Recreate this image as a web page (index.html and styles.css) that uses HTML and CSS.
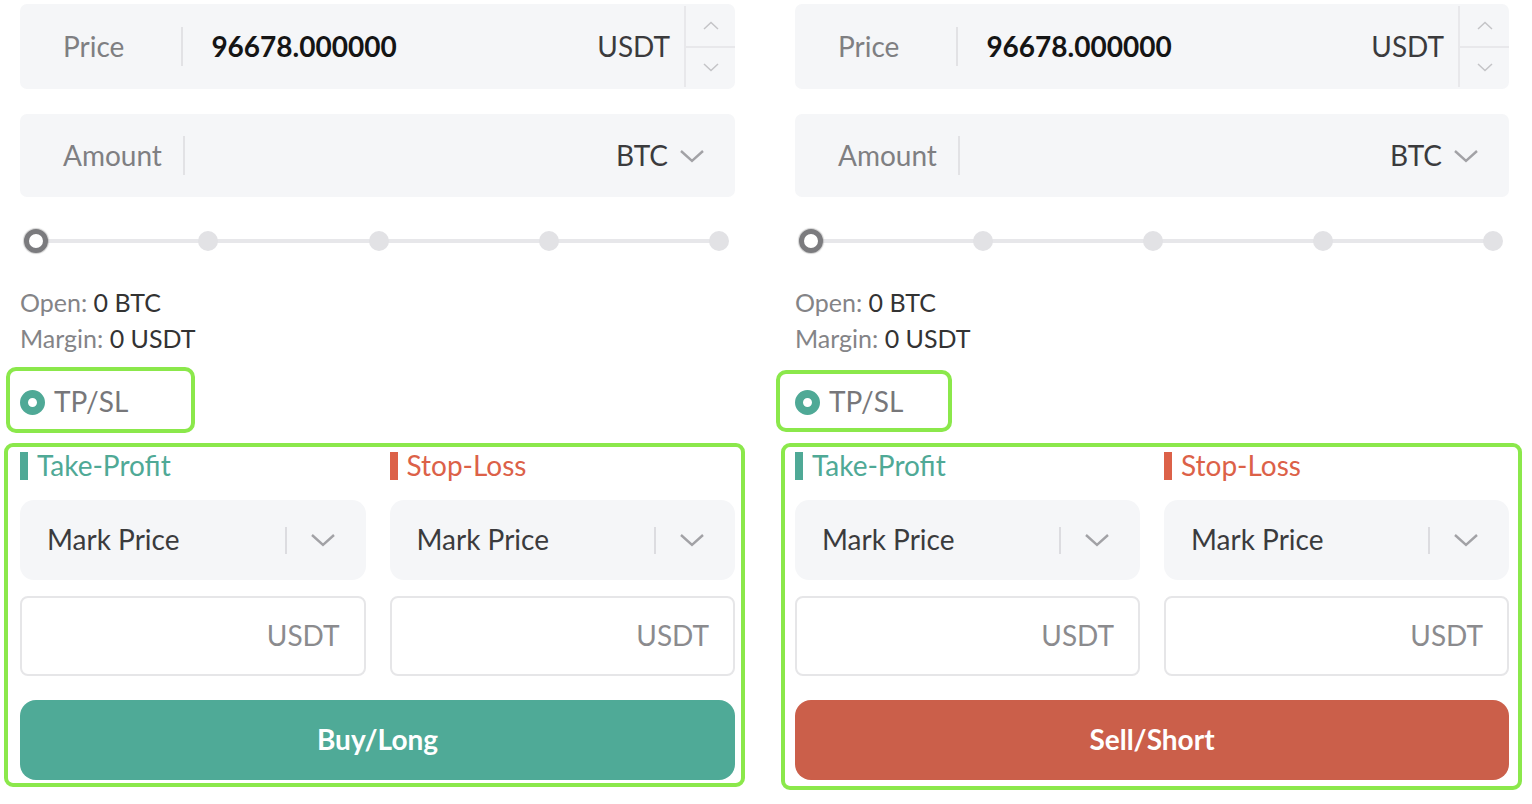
FILE: index.html
```html
<!DOCTYPE html>
<html>
<head>
<meta charset="utf-8">
<link rel="stylesheet" href="styles.css">
</head>
<body>
<div class="page">
  <section class="col">
    <div class="field price">
      <span class="label">Price</span>
      <span class="sep"></span>
      <span class="value">96678.000000</span>
      <span class="unit">USDT</span>
      <div class="spinner">
        <div class="spin"><svg width="16" height="9" viewBox="0 0 16 9"><path d="M1 8 L8 1.5 L15 8" fill="none" stroke="#c4c4c7" stroke-width="1.5"/></svg></div>
        <div class="spin"><svg width="16" height="9" viewBox="0 0 16 9"><path d="M1 1 L8 7.5 L15 1" fill="none" stroke="#c4c4c7" stroke-width="1.5"/></svg></div>
      </div>
    </div>
    <div class="field amount">
      <span class="label">Amount</span>
      <span class="sep"></span>
      <span class="value"></span>
      <span class="unit">BTC</span>
      <svg class="chev" width="26" height="14" viewBox="0 0 26 14"><path d="M2 2 L13 12 L24 2" fill="none" stroke="#a2a2a6" stroke-width="2.4"/></svg>
    </div>
    <div class="slider">
      <span class="track"></span>
      <span class="dot active"></span>
      <span class="dot"></span>
      <span class="dot"></span>
      <span class="dot"></span>
      <span class="dot"></span>
    </div>
    <div class="info">
      <div><span class="k">Open:</span> <span class="v">0 BTC</span></div>
      <div><span class="k">Margin:</span> <span class="v">0 USDT</span></div>
    </div>
    <div class="tpsl"><span class="radio"></span><span>TP/SL</span></div>
    <div class="tpgrid">
      <div class="sub">
        <div class="title tp">Take-Profit</div>
        <div class="select"><span class="stext">Mark Price</span><span class="ssep"></span><svg class="chev" width="26" height="14" viewBox="0 0 26 14"><path d="M2 2 L13 12 L24 2" fill="none" stroke="#a2a2a6" stroke-width="2.4"/></svg></div>
        <div class="input"><span>USDT</span></div>
      </div>
      <div class="sub">
        <div class="title sl">Stop-Loss</div>
        <div class="select"><span class="stext">Mark Price</span><span class="ssep"></span><svg class="chev" width="26" height="14" viewBox="0 0 26 14"><path d="M2 2 L13 12 L24 2" fill="none" stroke="#a2a2a6" stroke-width="2.4"/></svg></div>
        <div class="input"><span>USDT</span></div>
      </div>
    </div>
    <button class="btn buy">Buy/Long</button>
    <div class="mark mark-tpsl-l"></div>
    <div class="mark mark-box-l"></div>
  </section>

  <section class="col">
    <div class="field price">
      <span class="label">Price</span>
      <span class="sep"></span>
      <span class="value">96678.000000</span>
      <span class="unit">USDT</span>
      <div class="spinner">
        <div class="spin"><svg width="16" height="9" viewBox="0 0 16 9"><path d="M1 8 L8 1.5 L15 8" fill="none" stroke="#c4c4c7" stroke-width="1.5"/></svg></div>
        <div class="spin"><svg width="16" height="9" viewBox="0 0 16 9"><path d="M1 1 L8 7.5 L15 1" fill="none" stroke="#c4c4c7" stroke-width="1.5"/></svg></div>
      </div>
    </div>
    <div class="field amount">
      <span class="label">Amount</span>
      <span class="sep"></span>
      <span class="value"></span>
      <span class="unit">BTC</span>
      <svg class="chev" width="26" height="14" viewBox="0 0 26 14"><path d="M2 2 L13 12 L24 2" fill="none" stroke="#a2a2a6" stroke-width="2.4"/></svg>
    </div>
    <div class="slider">
      <span class="track"></span>
      <span class="dot active"></span>
      <span class="dot"></span>
      <span class="dot"></span>
      <span class="dot"></span>
      <span class="dot"></span>
    </div>
    <div class="info">
      <div><span class="k">Open:</span> <span class="v">0 BTC</span></div>
      <div><span class="k">Margin:</span> <span class="v">0 USDT</span></div>
    </div>
    <div class="tpsl"><span class="radio"></span><span>TP/SL</span></div>
    <div class="tpgrid">
      <div class="sub">
        <div class="title tp">Take-Profit</div>
        <div class="select"><span class="stext">Mark Price</span><span class="ssep"></span><svg class="chev" width="26" height="14" viewBox="0 0 26 14"><path d="M2 2 L13 12 L24 2" fill="none" stroke="#a2a2a6" stroke-width="2.4"/></svg></div>
        <div class="input"><span>USDT</span></div>
      </div>
      <div class="sub">
        <div class="title sl">Stop-Loss</div>
        <div class="select"><span class="stext">Mark Price</span><span class="ssep"></span><svg class="chev" width="26" height="14" viewBox="0 0 26 14"><path d="M2 2 L13 12 L24 2" fill="none" stroke="#a2a2a6" stroke-width="2.4"/></svg></div>
        <div class="input"><span>USDT</span></div>
      </div>
    </div>
    <button class="btn sell">Sell/Short</button>
    <div class="mark mark-tpsl-r"></div>
    <div class="mark mark-box-r"></div>
  </section>
</div>
</body>
</html>
```

FILE: styles.css
```css
* { box-sizing: border-box; }
html, body { margin: 0; padding: 0; background: #fff; }
body { font-family: "Lato", "Noto Sans", "Liberation Sans", sans-serif; color: #333; min-height: 804px; }

.page {
  display: grid;
  grid-template-columns: 715px 714px;
  column-gap: 60px;
  padding: 4px 0 24px 20px;
}
.col { position: relative; display: flex; flex-direction: column; }

.field {
  display: flex;
  align-items: center;
  background: #f5f6f8;
  border-radius: 7px;
  padding-left: 43px;
}
.field.price { height: 85px; }
.field.amount { height: 83px; margin-top: 25px; padding-right: 30px; }
.field .label, .field .value, .field .unit { padding-bottom: 2px; }
.field .label { font-size: 28px; color: #7f7f82; }
.field .sep { width: 2px; height: 39px; background: #e2e2e5; margin-left: 57px; margin-right: 28px; }
.field.amount .sep { margin-left: 21px; }
.field .value { font-size: 28px; font-weight: 700; color: #151515; flex: 1; }
.field .unit { font-size: 28px; color: #3b3b3d; }
.field.price .unit { margin-right: 14px; }
.field.amount .unit { margin-right: 11px; }

.spinner {
  width: 51px;
  align-self: stretch;
  margin: 2px 0;
  border-left: 2px solid #e8e8eb;
  display: flex;
  flex-direction: column;
}
.spin { flex: 1; display: flex; align-items: center; justify-content: center; }
.spin + .spin { border-top: 2px solid #e8e8eb; }

.slider {
  position: relative;
  height: 24px;
  margin-top: 32px;
  display: flex;
  justify-content: space-between;
  align-items: center;
  padding: 0 6px 0 4px;
}
.slider .track {
  position: absolute;
  left: 16px; right: 16px;
  top: 10px;
  height: 4px;
  background: #e7e7ea;
  border-radius: 2px;
}
.slider .dot {
  position: relative;
  width: 20px; height: 20px;
  border-radius: 50%;
  background: #e2e2e5;
}
.slider .dot.active {
  width: 24px; height: 24px;
  background: #fff;
  border: 5px solid #7b7b7e;
  box-shadow: 0 0 1px 1px rgba(120,120,120,0.35);
}

.info { margin-top: 31px; font-size: 25px; line-height: 36px; }
.info .k { color: #848487; }
.info .v { color: #333; }

.tpsl {
  display: flex; align-items: center;
  height: 36px; margin-top: 28px;
  font-size: 28px; color: #77777a;
}
.tpsl span:last-child { padding-bottom: 2px; }
.radio {
  width: 25px; height: 25px; border-radius: 50%;
  border: 8px solid #4fa996; background: #fff;
  margin-right: 9px;
}

.tpgrid {
  display: grid;
  grid-template-columns: 1fr 1fr;
  column-gap: 24px;
  margin-top: 32px;
}
.title {
  height: 28px;
  font-size: 28px;
  line-height: 26px;
  border-left: 8px solid;
  padding-left: 9px;
}
.title.tp { color: #4fa996; border-color: #4fa996; }
.title.sl { color: #dc6148; border-color: #dc6148; }

.select {
  height: 80px;
  margin-top: 20px;
  background: #f5f6f8;
  border-radius: 14px;
  display: flex; align-items: center;
  padding-left: 27px;
}
.select .stext { flex: 1; font-size: 28px; color: #3b3b3d; padding-bottom: 2px; }
.select .ssep { width: 2px; height: 27px; background: #dcdce0; margin-right: 23px; }
.select .chev { margin-right: 30px; }

.input {
  height: 80px;
  margin-top: 16px;
  border: 2px solid #e6e6e8;
  border-radius: 8px;
  display: flex; align-items: center; justify-content: flex-end;
  padding: 0 24px 2px 0;
  font-size: 28px; color: #8b8b8e;
}

.btn {
  height: 80px;
  margin-top: 24px;
  border: 0;
  border-radius: 16px;
  color: #fff;
  font-family: "Lato", "Noto Sans", sans-serif;
  font-size: 28px;
  font-weight: 700;
  padding-bottom: 3px;
}
.btn.buy { background: #4faa97; }
.btn.sell { background: #cb5f4a; }

.mark {
  position: absolute;
  border: 4px solid #8be84b;
  pointer-events: none;
}
.mark-tpsl-l { left: -14px; top: 363px; width: 189px; height: 66px; border-radius: 10px; }
.mark-box-l { left: -16px; top: 439px; width: 741px; height: 344px; border-radius: 9px; }
.mark-tpsl-r { left: -19px; top: 366px; width: 176px; height: 62px; border-radius: 10px; }
.mark-box-r { left: -14px; top: 439px; width: 741px; height: 347px; border-radius: 9px; }
```
